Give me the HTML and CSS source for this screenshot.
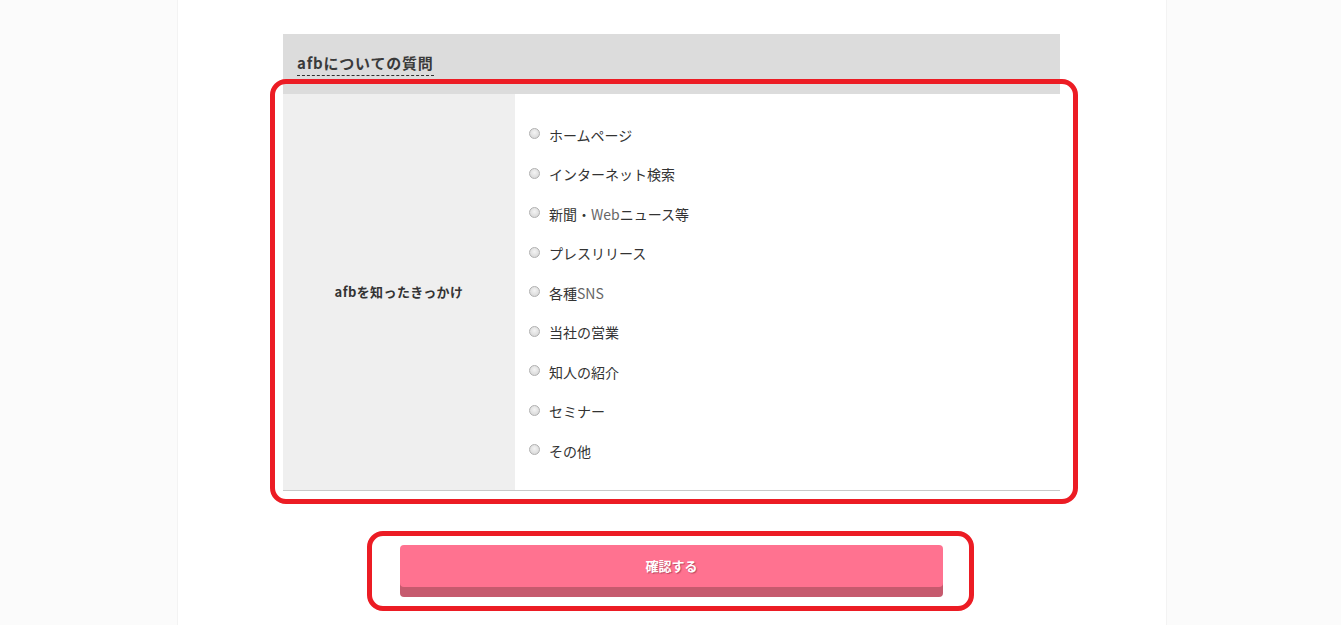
FILE: index.html
```html
<!DOCTYPE html>
<html lang="ja">
<head>
  <meta charset="UTF-8">
  <meta name="viewport" content="width=device-width, initial-scale=1.0">
  <title>afbについての質問</title>
  <link rel="stylesheet" href="styles.css">
</head>
<body>
  <div class="page">
    <section class="question">
      <div class="question-head">
        <h2 class="question-title">afbについての質問</h2>
      </div>

      <div class="question-row">
        <span class="mark mark-table"></span>
        <div class="question-label">afbを知ったきっかけ</div>
        <ul class="choice-list">
          <li><label><span class="radio"></span><span>ホームページ</span></label></li>
          <li><label><span class="radio"></span><span>インターネット検索</span></label></li>
          <li><label><span class="radio"></span><span>新聞・<span class="latin">Web</span>ニュース等</span></label></li>
          <li><label><span class="radio"></span><span>プレスリリース</span></label></li>
          <li><label><span class="radio"></span><span>各種<span class="latin">SNS</span></span></label></li>
          <li><label><span class="radio"></span><span>当社の営業</span></label></li>
          <li><label><span class="radio"></span><span>知人の紹介</span></label></li>
          <li><label><span class="radio"></span><span>セミナー</span></label></li>
          <li><label><span class="radio"></span><span>その他</span></label></li>
        </ul>
      </div>
    </section>

    <div class="submit-area">
      <div class="submit-wrap">
        <span class="mark mark-button"></span>
        <button class="submit-btn" type="button">確認する</button>
      </div>
    </div>
  </div>
</body>
</html>
```

FILE: styles.css
```css
* {
  margin: 0;
  padding: 0;
  box-sizing: border-box;
}

body {
  background-color: #fbfbfb;
  color: #333;
  font-family: "Noto Sans CJK JP", "Noto Sans", sans-serif;
  overflow: hidden;
  padding-left: 3px;
}

.page {
  width: 990px;
  min-height: 100vh;
  margin: 0 auto;
  padding: 34px 106px 20px 105px;
  background: #fff;
  border-left: 1px solid #f3f3f3;
  border-right: 1px solid #f3f3f3;
}

.question-head {
  height: 60px;
  padding: 16px 14px 0;
  background-color: #dcdcdc;
}

.question-title {
  display: inline-block;
  font-size: 15px;
  line-height: 20px;
  font-weight: bold;
  letter-spacing: 0.8px;
  color: #3a3a3a;
  padding-bottom: 2px;
  border-bottom: 1px dashed #333;
}

.question-row {
  position: relative;
  display: grid;
  grid-template-columns: 232px 1fr;
  border-bottom: 1px solid #c8c8c8;
}

.question-label {
  display: flex;
  align-items: center;
  justify-content: center;
  background-color: #efefef;
  font-size: 13px;
  font-weight: bold;
  letter-spacing: 0.4px;
  color: #333;
}

.choice-list {
  list-style: none;
  padding: 21px 0 19px 14px;
}

.choice-list li {
  height: 39.5px;
  display: flex;
  align-items: center;
}

.choice-list label {
  display: flex;
  align-items: center;
  gap: 9px;
  font-size: 14px;
  color: #333;
  cursor: pointer;
}

.latin {
  color: #666;
}

.radio {
  width: 11px;
  height: 11px;
  margin-top: -2px;
  border-radius: 50%;
  border: 1px solid #b0b0b0;
  background: radial-gradient(circle at 50% 40%, #f4f4f4 0%, #dcdcdc 70%, #cfcfcf 100%);
}

.submit-area {
  display: flex;
  justify-content: center;
  margin-top: 54px;
}

.submit-wrap {
  position: relative;
}

.submit-btn {
  display: block;
  width: 543px;
  height: 42px;
  border: none;
  border-radius: 4px;
  background-color: #ff7290;
  box-shadow: 0 10px 0 #c65a6e;
  color: #fff;
  font-family: "Noto Sans CJK JP", sans-serif;
  font-size: 13px;
  font-weight: bold;
  text-shadow: 1px 1px 1px rgba(120, 30, 50, 0.5);
  cursor: pointer;
}

/* red annotation frames */
.mark {
  position: absolute;
  border: 5px solid #ec1c24;
  border-radius: 16px;
  pointer-events: none;
  z-index: 2;
}

.mark-table {
  top: -15px;
  bottom: -14px;
  left: -13px;
  right: -18px;
}

.mark-button {
  top: -14px;
  bottom: -24px;
  left: -33px;
  right: -31px;
}
```
